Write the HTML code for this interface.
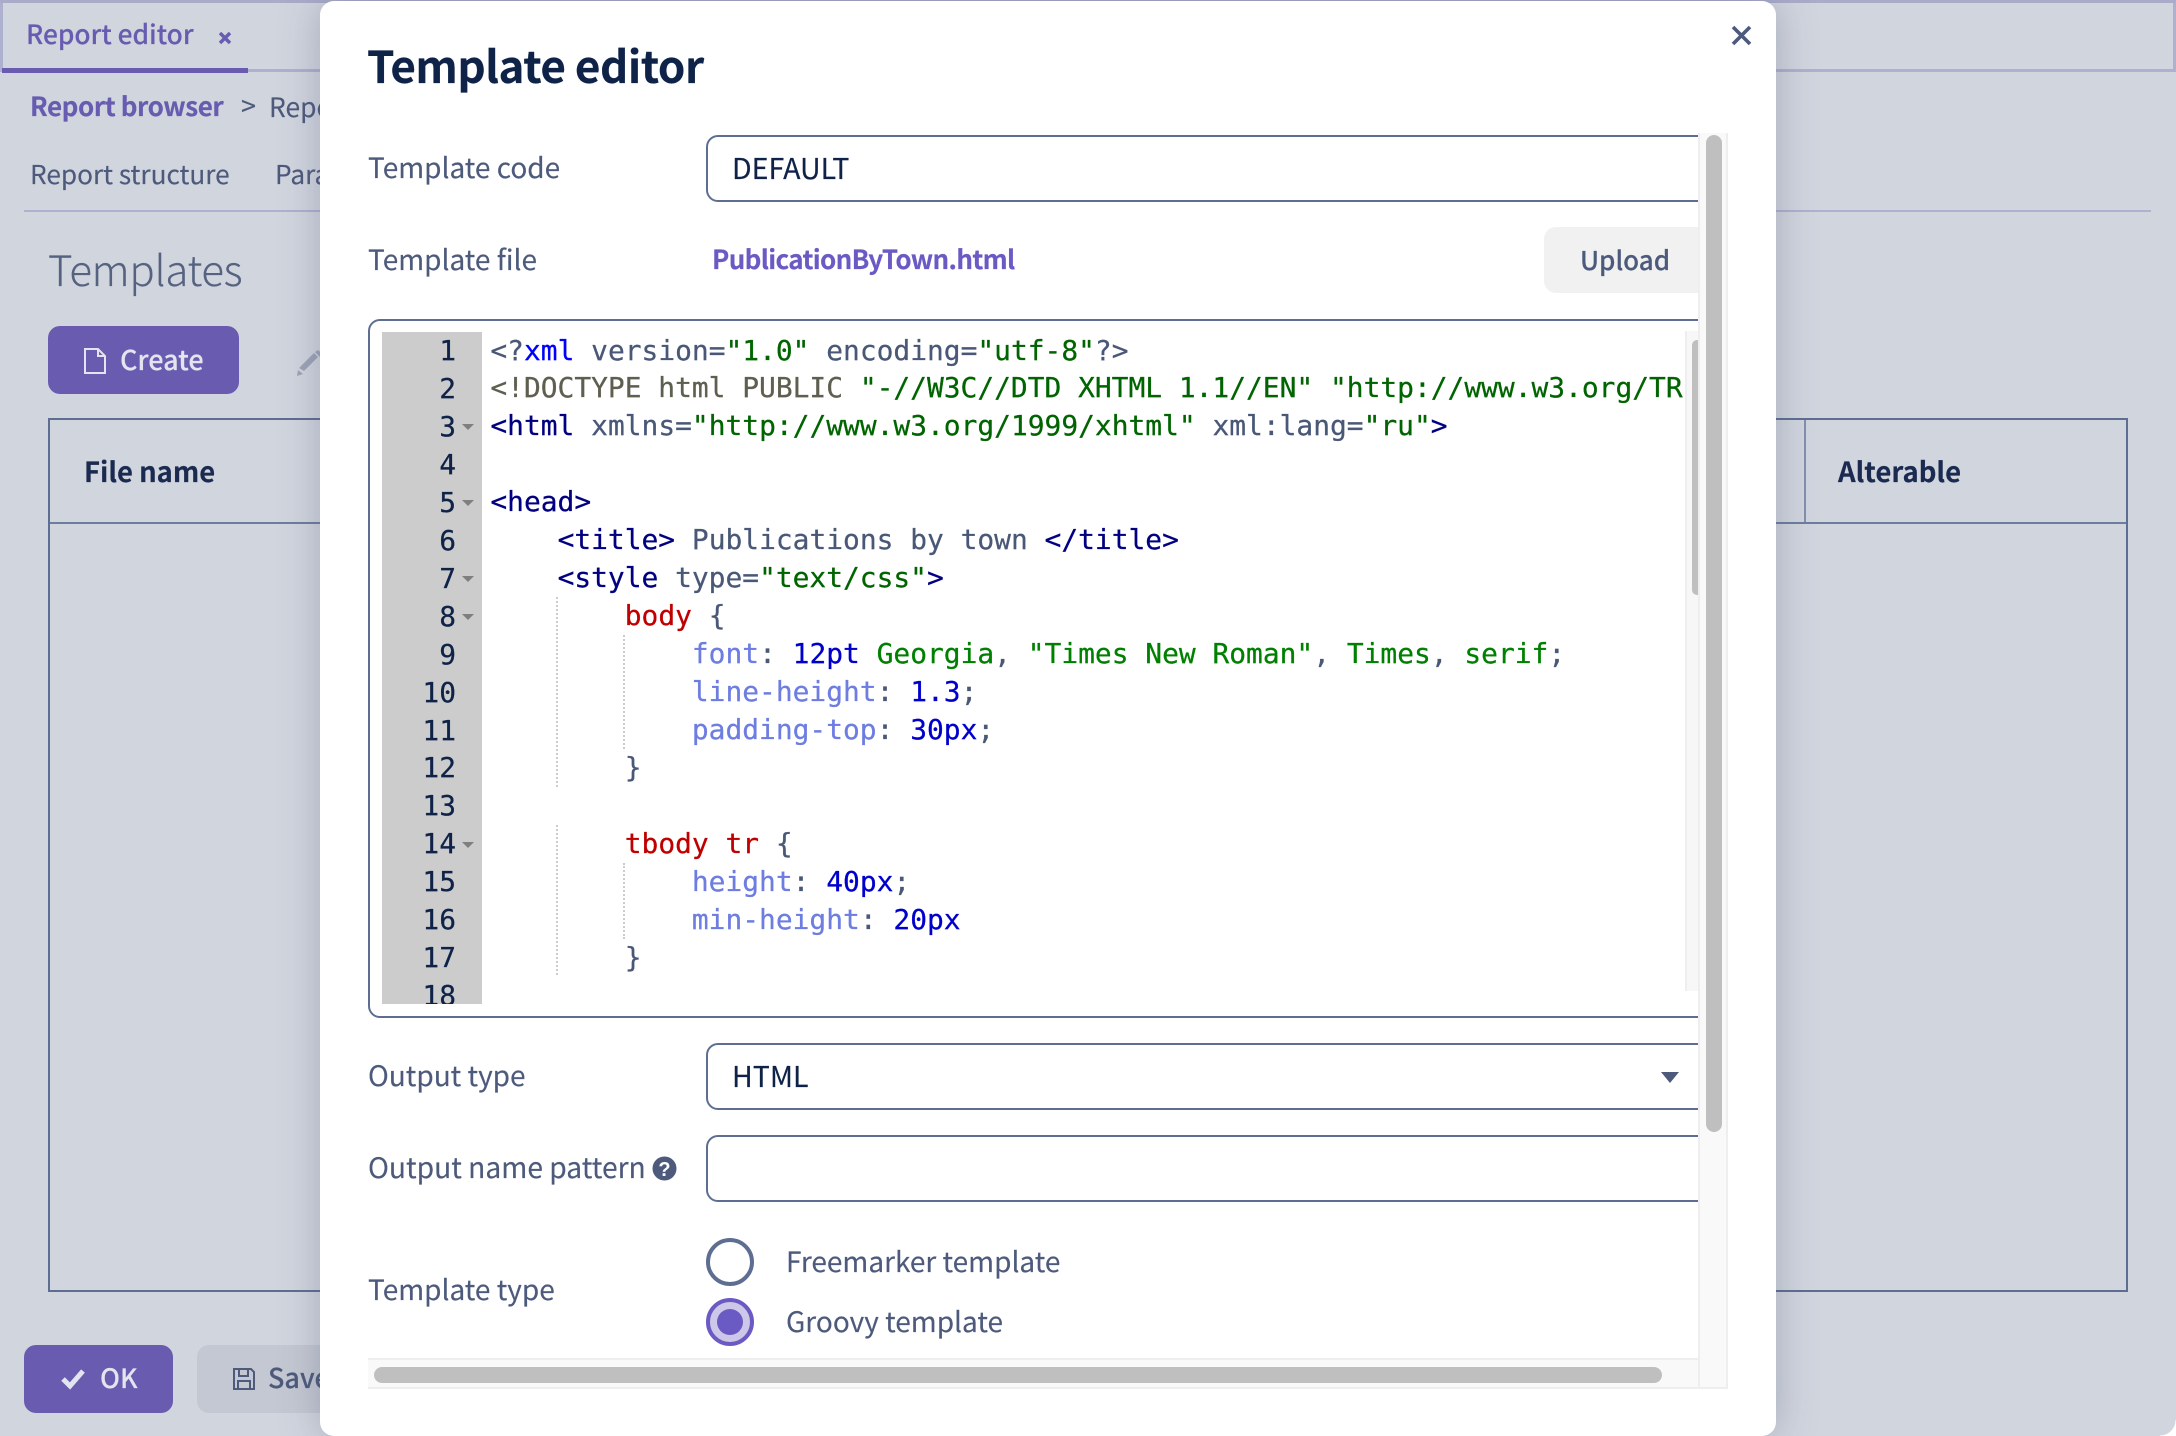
<!DOCTYPE html>
<html><head><meta charset="utf-8"><style>
html,body{margin:0;padding:0;width:2176px;height:1436px;overflow:hidden;background:#fff}
*{box-sizing:border-box}
.t{position:absolute;white-space:nowrap;line-height:40px;font-family:"Noto Sans CJK SC","Liberation Sans",sans-serif;font-size:28px;color:#4d5a7c;-webkit-text-stroke:.15px currentColor}
.a{position:absolute}
#page{position:absolute;left:0;top:0;width:2176px;height:1436px;background:#d1d5de;border-bottom-right-radius:14px;overflow:hidden}
#dlg{position:absolute;left:320px;top:1px;width:1456px;height:1435px;background:#fff;border-radius:14px;box-shadow:0 0 40px rgba(80,90,120,.35);overflow:hidden}
#clip{position:absolute;left:0;top:0;width:1378px;height:1357px;overflow:hidden}
.inp{position:absolute;border:2px solid #5d6e92;border-radius:12px;background:#fff}
pre{margin:0;font-family:"DejaVu Sans Mono",monospace;font-size:27.9px;line-height:37.96px;color:#4a5878;position:absolute;white-space:pre;-webkit-text-stroke:.25px currentColor}
.g{color:#006400}.n{color:#000080}.b{color:#0000ff}.d{color:#5f5f50}.r{color:#c00000}.p{color:#6d7de0}.v{color:#0000cd}.f{color:#008000}
.ig{position:absolute;width:0;border-left:2px dotted #ccc}
.fold{position:absolute;width:0;height:0;border-left:6px solid transparent;border-right:6px solid transparent;border-top:6px solid #7f7f7f}
</style></head><body>
<div id="page">
  <div class="a" style="left:0;top:0;width:2176px;height:72px;border-top:3px solid #a9abc9;border-bottom:3px solid #aeb0cf;border-left:3px solid #aeb0cf;border-right:3px solid #aeb0cf"></div>
  <div class="a" style="left:2px;top:68px;width:246px;height:5px;background:#685bb0"></div>
  <div class="t" style="left:26px;top:13px;font-size:26.3px;font-weight:500;color:#675cb0">Report editor</div>
  <svg class="a" style="left:218px;top:31px" width="14" height="14" viewBox="0 0 14 14" fill="none" stroke="#675cb0" stroke-width="3.4"><path d="M2 2L12 12M12 2L2 12"/></svg>
  <div class="t" style="left:30px;top:86px;font-size:26px;font-weight:700;letter-spacing:-.43px;color:#675cb0">Report browser</div>
  <div class="t" style="left:241px;top:85px;font-size:27px">&gt;</div>
  <div class="t" style="left:269px;top:86px;font-size:26.4px">Report</div>
  <div class="t" style="left:30px;top:153px;font-size:26.2px">Report structure</div>
  <div class="t" style="left:275px;top:153px;font-size:26.2px">Parameters</div>
  <div class="a" style="left:24px;top:210px;width:2127px;height:2px;background:#aeb1cf"></div>
  <div class="t" style="left:48px;top:249px;font-size:42px;letter-spacing:-.3px;font-weight:300;color:#566380">Templates</div>
  <div class="a" style="left:48px;top:326px;width:191px;height:68px;border-radius:12px;background:#685bb0"></div>
  <svg class="a" style="left:83px;top:347px" width="24" height="28" viewBox="0 0 24 28" fill="none" stroke="#e2e4ee" stroke-width="2"><path d="M2 2H15L22 9V26H2Z M15 2V9H22"/></svg>
  <div class="t" style="left:120px;top:339px;font-size:27px;font-weight:500;color:#e2e4ee">Create</div>
  <svg class="a" style="left:297px;top:350px" width="28" height="26" viewBox="0 0 28 26" fill="#9da4b6"><path d="M2 18L17 3L21 7L7 21ZM18 2L21 0L27 5L24 8ZM1 20L6 24L0 26Z"/></svg>
  <div class="a" style="left:48px;top:418px;width:2080px;height:874px;border:2px solid #5d6e92"></div>
  <div class="a" style="left:50px;top:522px;width:2076px;height:2px;background:#6d7d9e"></div>
  <div class="a" style="left:1804px;top:420px;width:2px;height:102px;background:#8190ae"></div>
  <div class="t" style="left:84px;top:450px;font-size:27.4px;font-weight:700;color:#1a2a50">File name</div>
  <div class="t" style="left:1838px;top:450px;font-size:27.5px;font-weight:700;color:#1a2a50">Alterable</div>
  <div class="a" style="left:24px;top:1345px;width:149px;height:68px;border-radius:12px;background:#685bb0"></div>
  <svg class="a" style="left:60px;top:1367px" width="26" height="24" viewBox="0 0 26 24" fill="none" stroke="#e2e4ee" stroke-width="5"><path d="M3 12L10 19L23 4"/></svg>
  <div class="t" style="left:100px;top:1357px;font-size:26.5px;font-weight:500;color:#e2e4ee">OK</div>
  <div class="a" style="left:197px;top:1345px;width:200px;height:68px;border-radius:12px;background:#c4c8d2"></div>
  <svg class="a" style="left:232px;top:1367px" width="24" height="24" viewBox="0 0 24 24" fill="none" stroke="#4d5a7c" stroke-width="2"><path d="M2 2H19L22 5V22H2Z M7 2V9H16V2 M6 22V14H18V22"/></svg>
  <div class="t" style="left:268px;top:1357px;font-size:27px;font-weight:500">Save</div>
</div>
<div class="a" style="left:0;top:0;width:2176px;height:3px;background:#a9abc9"></div>
<div id="dlg">
  <div class="t" style="left:47px;top:39px;font-size:44px;letter-spacing:-.5px;line-height:48px;font-weight:700;color:#0f2248">Template editor</div>
  <svg class="a" style="left:1411px;top:24px" width="21" height="21" viewBox="0 0 21 21" fill="none" stroke="#4d5a7c" stroke-width="3.6"><path d="M2 2L19 19M19 2L2 19"/></svg>
  <div id="clip">
    <div class="t" style="left:48px;top:146px;font-size:28px">Template code</div>
    <div class="inp" style="left:386px;top:134px;width:1100px;height:67px"></div>
    <div class="t" style="left:412px;top:147px;font-size:28.6px;color:#0f2248">DEFAULT</div>
    <div class="t" style="left:48px;top:238px;font-size:28px">Template file</div>
    <div class="t" style="left:392px;top:238px;font-size:26px;letter-spacing:-.65px;font-weight:700;color:#6a5ac4">PublicationByTown.html</div>
    <div class="a" style="left:1224px;top:226px;width:220px;height:66px;border-radius:12px;background:#f1f1f1"></div>
    <div class="t" style="left:1260px;top:239px;font-size:26px;font-weight:500">Upload</div>
    <div class="inp" style="left:48px;top:318px;width:1400px;height:699px"></div>
    <div class="a" style="left:1365px;top:330px;width:15px;height:660px;background:#f7f7f7;border-left:2px solid #eee"></div>
    <div class="a" style="left:1372px;top:339px;width:10px;height:255px;background:#bfbfbf;border-radius:6px"></div>
    <div class="a" style="left:62px;top:331px;width:100px;height:672px;background:#ccc;overflow:hidden">
      <pre style="left:0;top:0;width:74px;text-align:right;color:#0f2248">1
2
3
4
5
6
7
8
9
10
11
12
13
14
15
16
17
18</pre>
    </div>
    <div class="fold" style="left:142px;top:423px"></div>
    <div class="fold" style="left:142px;top:499px"></div>
    <div class="fold" style="left:142px;top:575px"></div>
    <div class="fold" style="left:142px;top:613px"></div>
    <div class="fold" style="left:142px;top:841px"></div>
    <div class="ig" style="left:236px;top:596px;height:190px"></div>
    <div class="ig" style="left:236px;top:824px;height:150px"></div>
    <div class="ig" style="left:303px;top:634px;height:114px"></div>
    <div class="ig" style="left:303px;top:862px;height:76px"></div>
    <div class="a" style="left:170px;top:331px;width:1193px;height:672px;overflow:hidden">
<pre style="left:.4px;top:-.5px">&lt;?<span class="b">xml</span> version=<span class="g">"1.0"</span> encoding=<span class="g">"utf-8"</span>?&gt;
<span class="d">&lt;!DOCTYPE html PUBLIC</span> <span class="g">"-//W3C//DTD XHTML 1.1//EN"</span> <span class="g">"http://www.w3.org/TR/xhtml11/DTD/xhtml11.dtd"</span>&gt;
<span class="n">&lt;html</span> xmlns=<span class="g">"http://www.w3.org/1999/xhtml"</span> xml:lang=<span class="g">"ru"</span><span class="n">&gt;</span>

<span class="n">&lt;head&gt;</span>
    <span class="n">&lt;title&gt;</span> Publications by town <span class="n">&lt;/title&gt;</span>
    <span class="n">&lt;style</span> type=<span class="g">"text/css"</span><span class="n">&gt;</span>
        <span class="r">body</span> {
            <span class="p">font</span>: <span class="v">12pt</span> <span class="f">Georgia</span>, <span class="f">"Times New Roman"</span>, <span class="f">Times</span>, <span class="f">serif</span>;
            <span class="p">line-height</span>: <span class="v">1.3</span>;
            <span class="p">padding-top</span>: <span class="v">30px</span>;
        }

        <span class="r">tbody tr</span> {
            <span class="p">height</span>: <span class="v">40px</span>;
            <span class="p">min-height</span>: <span class="v">20px</span>
        }</pre>
    </div>
    <div class="t" style="left:48px;top:1054px;font-size:28px">Output type</div>
    <div class="inp" style="left:386px;top:1042px;width:1100px;height:67px"></div>
    <div class="t" style="left:412px;top:1055px;font-size:28.5px;color:#0f2248">HTML</div>
    <div class="a" style="left:1341px;top:1071px;width:0;height:0;border-left:9px solid transparent;border-right:9px solid transparent;border-top:11px solid #4d5a7c"></div>
    <div class="t" style="left:48px;top:1146px;font-size:28.2px">Output name pattern</div>
    <svg class="a" style="left:332px;top:1155px" width="25" height="25" viewBox="0 0 25 25"><circle cx="12.5" cy="12.5" r="12" fill="#4d5a7c"/><text x="12.5" y="20" font-family="Liberation Sans" font-weight="700" font-size="20" fill="#fff" text-anchor="middle">?</text></svg>
    <div class="inp" style="left:386px;top:1134px;width:1100px;height:67px"></div>
    <div class="t" style="left:48px;top:1268px;font-size:28px">Template type</div>
    <div class="a" style="left:386px;top:1237px;width:48px;height:48px;border-radius:50%;border:4px solid #5d6e92;background:#fff"></div>
    <div class="a" style="left:386px;top:1297px;width:48px;height:48px;border-radius:50%;border:4px solid #6a5ac4;background:#cdc8e8"></div>
    <div class="a" style="left:397px;top:1308px;width:26px;height:26px;border-radius:50%;background:#6a5ac4"></div>
    <div class="t" style="left:466px;top:1240px;font-size:28px">Freemarker template</div>
    <div class="t" style="left:466px;top:1300px;font-size:28px">Groovy template</div>
  </div>
  <div class="a" style="left:48px;top:1357px;width:1360px;height:31px;background:#f9f9f9;border-top:2px solid #eee;border-bottom:2px solid #eee"></div>
  <div class="a" style="left:1378px;top:132px;width:30px;height:1256px;background:#f9f9f9;border-left:2px solid #eee;border-right:2px solid #eee;border-bottom:2px solid #eee"></div>
  <div class="a" style="left:1386px;top:134px;width:16px;height:997px;background:#bfbfbf;border-radius:8px"></div>
  <div class="a" style="left:54px;top:1366px;width:1288px;height:16px;background:#bfbfbf;border-radius:8px"></div>
</div>
<div class="a" style="left:2160px;top:1420px;width:16px;height:16px;background:radial-gradient(circle at 0 0,transparent 15px,#fff 16px)"></div>
</body></html>
